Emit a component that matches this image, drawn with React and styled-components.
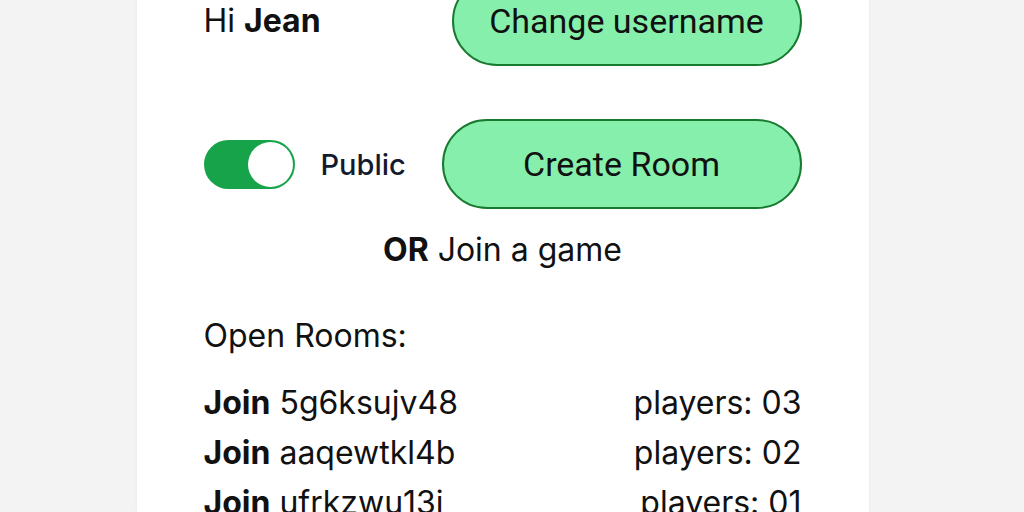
import React, { useState } from "react";
import styled, { createGlobalStyle } from "styled-components";

const GlobalStyle = createGlobalStyle`
  html, body {
    margin: 0;
    padding: 0;
    background: #f3f3f3;
  }
  body {
    font-family: Inter, "Liberation Sans", sans-serif;
    color: #111;
  }
`;

const Viewport = styled.div`
  height: 512px;
  overflow: hidden;
  display: flex;
  justify-content: center;
  padding-right: 19px;
`;

const Card = styled.div`
  width: 732px;
  box-sizing: border-box;
  margin-top: -24px;
  padding: 0 67px 40px;
  background: #fff;
  box-shadow: 0 0 3px rgba(0, 0, 0, 0.06);
  display: flex;
  flex-direction: column;
`;

const Row = styled.div`
  display: flex;
  align-items: center;
  justify-content: space-between;
  margin-top: ${(p) => p.$top || 0}px;
`;

const Greeting = styled.div`
  font-size: 32px;
  line-height: 40px;
  b {
    font-weight: 700;
  }
`;

const PillButton = styled.button`
  width: ${(p) => p.$width}px;
  height: 90px;
  box-sizing: border-box;
  border: 2px solid #177a30;
  border-radius: 45px;
  background: #86efac;
  font-family: Roboto, "Liberation Sans", sans-serif;
  font-size: 34px;
  color: #111;
  cursor: pointer;
`;

const ToggleGroup = styled.label`
  display: flex;
  align-items: center;
  gap: 26px;
  cursor: pointer;
`;

const Track = styled.span`
  width: 91px;
  height: 49px;
  box-sizing: border-box;
  border-radius: 25px;
  background: ${(p) => (p.$on ? "#16a34a" : "#d1d5db")};
  display: flex;
  align-items: center;
  justify-content: ${(p) => (p.$on ? "flex-end" : "flex-start")};
  padding: 2px;
`;

const Knob = styled.span`
  width: 45px;
  height: 45px;
  box-sizing: border-box;
  border-radius: 50%;
  background: #fff;
`;

const ToggleLabel = styled.span`
  font-size: 29px;
  font-weight: 500;
  color: #141a2e;
`;

const Divider = styled.div`
  margin-top: 21px;
  text-align: center;
  font-size: 32px;
  line-height: 40px;
  b {
    font-weight: 700;
  }
`;

const SectionTitle = styled.div`
  margin-top: 46px;
  font-size: 32px;
  line-height: 40px;
`;

const RoomList = styled.div`
  margin-top: 21px;
  display: flex;
  flex-direction: column;
`;

const RoomRow = styled.div`
  display: flex;
  justify-content: space-between;
  align-items: center;
  height: 50px;
  font-size: 32px;
  b {
    font-weight: 700;
    cursor: pointer;
  }
`;

const rooms = [
  { id: "5g6ksujv48", players: "03" },
  { id: "aaqewtkl4b", players: "02" },
  { id: "ufrkzwu13j", players: "01" },
  { id: "p0x9mnq2zt", players: "01" },
];

function App() {
  const [isPublic, setIsPublic] = useState(true);

  return (
    <>
      <GlobalStyle />
      <Viewport>
        <Card>
          <Row>
            <Greeting>
              Hi <b>Jean</b>
            </Greeting>
            <PillButton $width={350}>Change username</PillButton>
          </Row>
          <Row $top={53}>
            <ToggleGroup onClick={() => setIsPublic(!isPublic)}>
              <Track $on={isPublic}>
                <Knob />
              </Track>
              <ToggleLabel>Public</ToggleLabel>
            </ToggleGroup>
            <PillButton $width={360}>Create Room</PillButton>
          </Row>
          <Divider>
            <b>OR</b> Join a game
          </Divider>
          <SectionTitle>Open Rooms:</SectionTitle>
          <RoomList>
            {rooms.map((r) => (
              <RoomRow key={r.id}>
                <span>
                  <b>Join</b> {r.id}
                </span>
                <span>players: {r.players}</span>
              </RoomRow>
            ))}
          </RoomList>
        </Card>
      </Viewport>
    </>
  );
}

export default App;
